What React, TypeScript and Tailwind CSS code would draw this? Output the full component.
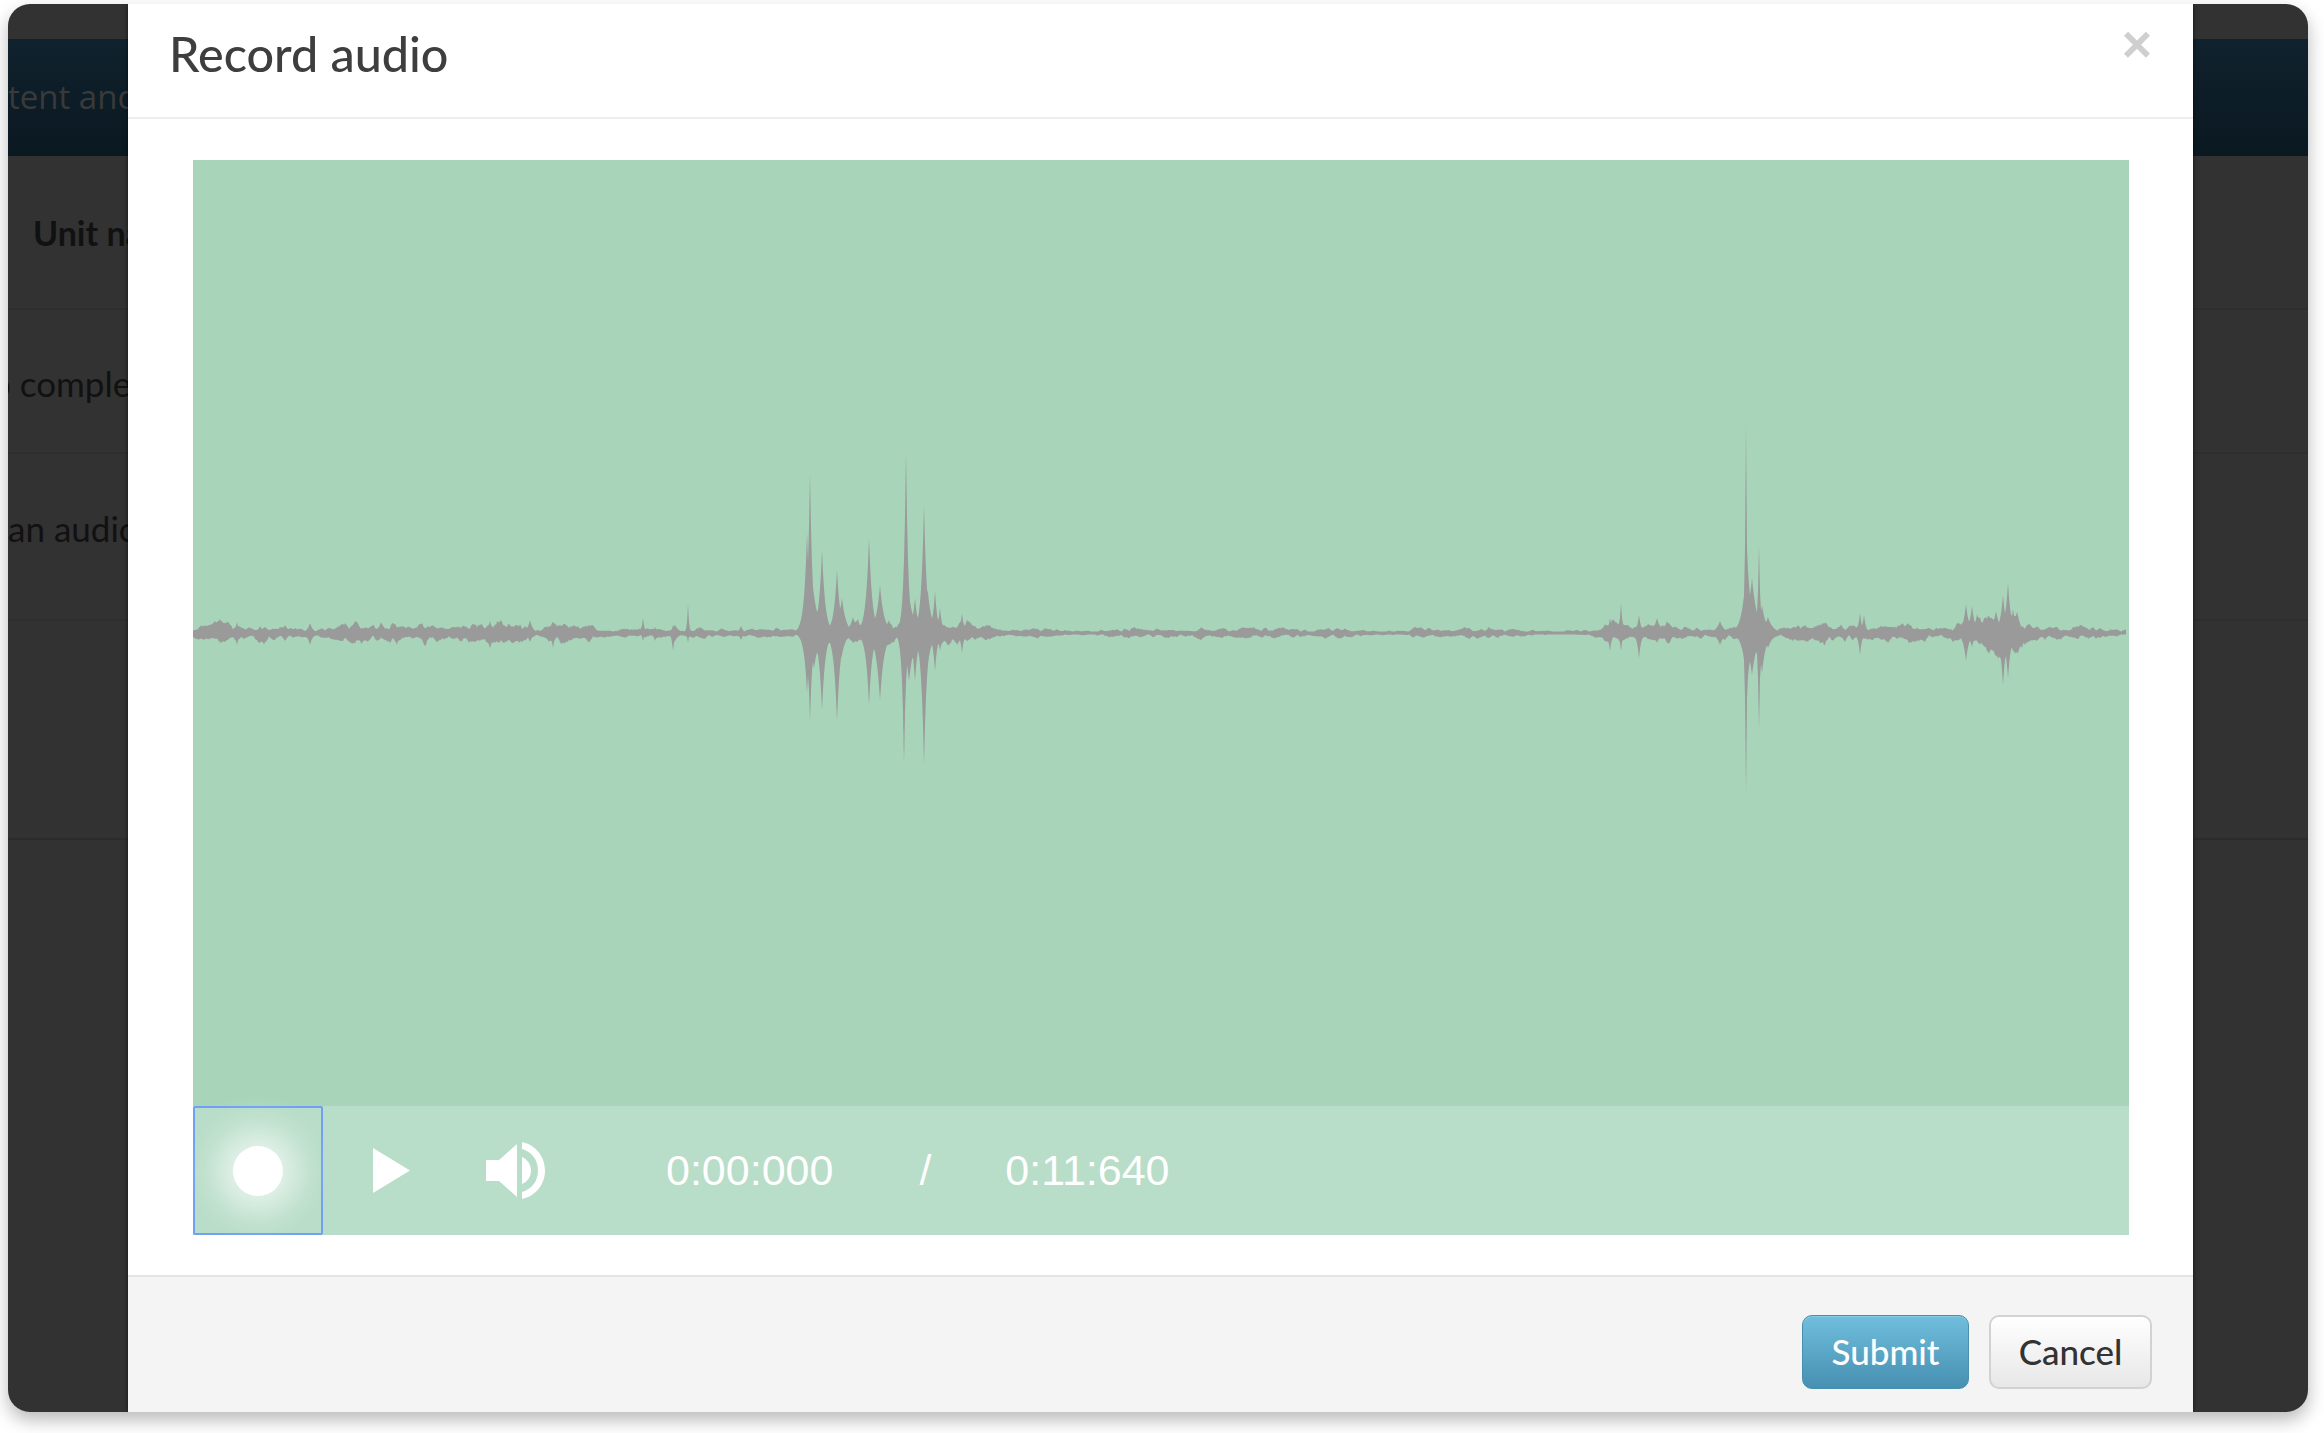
const W = 1936;
const H = 946;
const MID = 473;

// x in page px, up / down = spike height in px
const spikes: [number, number, number, number][] = [
  [237, 11, 12, 2], [260, 7, 10, 3], [285, 8, 8, 4], [310, 10, 12, 3], [343, 7, 8, 3],
  [490, 12, 15, 3], [505, 6, 8, 4], [520, 9, 7, 3], [530, 13, 9, 3], [553, 9, 15, 2], [570, 7, 5, 3],
  [643, 15, 8, 1.5], [655, 6, 8, 2], [673, 8, 18, 1.5], [675, 8, 8, 4], [688, 29, 10, 1], [700, 6, 4, 2], [741, 7, 7, 2.5],
  [807, 100, 60, 3], [810, 160, 88, 2.4], [814, 38, 35, 5], [822, 83, 77, 3.2], [837, 63, 88, 3.2], [842, 35, 22, 4],
  [853, 16, 10, 4], [858, 14, 8, 3], [869, 95, 72, 3.2], [880, 48, 68, 4], [885, 14, 12, 4],
  [904, 60, 132, 2], [906, 182, 50, 2.2], [909, 38, 48, 5], [915, 35, 48, 3], [924, 128, 132, 2.8], [928, 40, 30, 4],
  [935, 42, 38, 2.5], [940, 25, 18, 2.2], [962, 20, 20, 2], [967, 14, 8, 3], [975, 7, 7, 5],
  [1610, 15, 18, 2], [1621, 30, 18, 1.5], [1639, 18, 25, 2.2], [1657, 15, 10, 3.5], [1667, 12, 10, 4], [1720, 12, 12, 4],
  [1746, 210, 162, 1.1], [1747, 80, 55, 4], [1752, 55, 42, 5], [1759, 88, 97, 1.3], [1762, 28, 40, 4], [1768, 16, 15, 5],
  [1793, 6, 5, 3], [1860, 20, 22, 2], [1864, 18, 6, 2], [1966, 29, 28, 3], [1972, 27, 14, 3], [1980, 16, 12, 3],
  [1990, 14, 12, 3], [1996, 22, 20, 4], [2003, 38, 52, 3], [2008, 50, 45, 3], [2013, 24, 18, 3], [2100, 5, 5, 6],
];

// envelope of the quiet parts: [x, half height]
const envelope: [number, number][] = [
  [193, 7], [560, 7], [620, 4], [795, 4], [815, 10], [950, 10], [1005, 3.6], [1590, 3.6],
  [1610, 8], [1740, 8], [1860, 7], [1945, 5.5], [1965, 14], [2015, 14], [2035, 5.5], [2130, 5.5],
];

function baseAt(x: number) {
  for (let i = 1; i < envelope.length; i++) {
    const [x0, y0] = envelope[i - 1];
    const [x1, y1] = envelope[i];
    if (x <= x1) return y0 + ((y1 - y0) * (x - x0)) / (x1 - x0);
  }
  return 5;
}

let seed = 41;
function rnd() {
  seed = (seed * 1664525 + 1013904223) % 4294967296;
  return seed / 4294967296;
}

function knots(count: number, lo: number, hi: number) {
  return Array.from({ length: count }, () => lo + rnd() * (hi - lo));
}

function sample(values: number[], t: number) {
  const i = Math.floor(t);
  const f = t - i;
  return values[i] * (1 - f) + values[i + 1] * f;
}

function buildWave() {
  const slow = knots(W / 18 + 2, 0.45, 1.4);
  const fastUp = knots(W / 4 + 2, 0.4, 1.35);
  const fastDown = knots(W / 4 + 2, 0.4, 1.35);
  const top: string[] = [];
  const bottom: string[] = [];
  for (let i = 0; i <= W - 3; i++) {
    const x = 193 + i;
    const base = baseAt(x) * sample(slow, i / 18);
    let up = Math.max(1.5, base * sample(fastUp, i / 4) * (0.85 + rnd() * 0.3));
    let down = Math.max(1.5, base * sample(fastDown, i / 4) * (0.85 + rnd() * 0.3));
    for (const [sx, su, sd, sw] of spikes) {
      const f = Math.exp(-Math.abs(x - sx) / sw);
      up = Math.max(up, su * f);
      down = Math.max(down, sd * f);
    }
    top.push(i + ' ' + (MID - up).toFixed(1));
    bottom.unshift(i + ' ' + (MID + down).toFixed(1));
  }
  return 'M' + top.join('L') + 'L' + bottom.join('L') + 'Z';
}

const wavePath = buildWave();

function Backdrop() {
  return (
    <div className="flex flex-col font-['Lato',sans-serif] text-[35px] whitespace-nowrap text-[#111111]">
      <div className="h-[35px]" />
      <div className="flex h-[117px] items-center overflow-hidden bg-gradient-to-b from-[#10222e] to-[#0a1820] pb-[2px] font-['Open_Sans',sans-serif] text-[33px] text-[#3a3a3a]">
        <span>tent and content</span>
      </div>
      <div className="flex h-[154px] items-center border-b-2 border-[#2e2e2e] pl-[25px] text-[34px] font-bold">Unit name</div>
      <div className="flex h-[144px] items-center overflow-hidden border-b-2 border-[#2e2e2e] pt-[4px]">
        <span className="ml-[-17px]">o complete</span>
      </div>
      <div className="flex h-[167px] items-center overflow-hidden border-b-2 border-[#2e2e2e] pb-[17px]">
        <span>an audio</span>
      </div>
      <div className="h-[219px] border-b-2 border-[#2b2b2b]" />
    </div>
  );
}

function SpeakerIcon() {
  return (
    <svg viewBox="0 0 60 58" className="h-[58px] w-[60px] fill-white">
      <path d="M0 18H13L31 2V55L13 39H0Z" />
      <path d="M36 15Q45 19 45 28.500Q45 38 36 42Z" />
      <path d="M36 0C50 3 59 15 59 28.500C59 42 50 54 36 57V50C46 47 52 39 52 28.500C52 18 46 10 36 7Z" />
    </svg>
  );
}

function RecorderControls() {
  return (
    <div className="flex h-[129px] items-center bg-[#b8ddc8] font-['Liberation_Sans',sans-serif] text-[43px] text-white">
      <button className="flex h-[129px] w-[130px] items-center justify-center rounded-[2px] border-2 border-[#6f9ff7]">
        <span className="h-[50px] w-[50px] rounded-full bg-white shadow-[0_0_36px_16px_rgba(255,255,255,0.72)]" />
      </button>
      <svg viewBox="0 0 37 45" className="ml-[50px] h-[45px] w-[37px] fill-white">
        <path d="M0 0L37 22.500L0 45Z" />
      </svg>
      <div className="ml-[76px]">
        <SpeakerIcon />
      </div>
      <span className="ml-[120px]">0:00:000</span>
      <span className="ml-[86px]">/</span>
      <span className="ml-[74px]">0:11:640</span>
    </div>
  );
}

function RecordModal() {
  return (
    <div className="absolute inset-y-0 left-[120px] flex w-[2065px] flex-col bg-white font-['Lato',sans-serif] shadow-[0_0_4px_rgba(0,0,0,0.6)]">
      <div className="flex h-[115px] shrink-0 items-start justify-between border-b-2 border-[#eeeeee] pl-[41px] pr-[41px]">
        <h3 className="mt-[19px] text-[48.5px] leading-[60px] font-medium text-[#3e3e3e]">Record audio</h3>
        <span className="mt-[10px] font-['Liberation_Sans',sans-serif] text-[52px] leading-[60px] font-bold text-[#cfcfcf]">×</span>
      </div>
      <div className="shrink-0 pt-[41px] pr-[64px] pb-[40px] pl-[65px]">
        <div className="h-[946px] bg-[#a8d5ba]">
          <svg viewBox={'0 0 ' + W + ' ' + H} className="block h-full w-full">
            <path d={wavePath} fill="#9a9a9a" />
          </svg>
        </div>
        <RecorderControls />
      </div>
      <div className="flex flex-1 items-center justify-end gap-[20px] border-t-2 border-[#e4e4e4] bg-[#f4f4f4] pt-[14px] pr-[41px] text-[35px] font-medium">
        <button className="h-[74px] w-[167px] rounded-[10px] border border-[#4a8eae] bg-gradient-to-b from-[#70bedd] to-[#4690b2] text-white shadow-[inset_0_1px_0_rgba(255,255,255,0.2)]">
          Submit
        </button>
        <button className="h-[74px] w-[163px] rounded-[10px] border-2 border-[#d2d2d2] bg-gradient-to-b from-white to-[#e7e7e7] text-[#333333]">
          Cancel
        </button>
      </div>
    </div>
  );
}

export default function App() {
  return (
    <div className="h-[1433px] w-[2324px] overflow-hidden bg-white pt-[4px] pl-[8px]">
      <div className="relative h-[1408px] w-[2300px] overflow-hidden rounded-[22px] bg-[#323232] shadow-[0_8px_18px_rgba(0,0,0,0.28)]">
        <Backdrop />
        <RecordModal />
      </div>
    </div>
  );
}
